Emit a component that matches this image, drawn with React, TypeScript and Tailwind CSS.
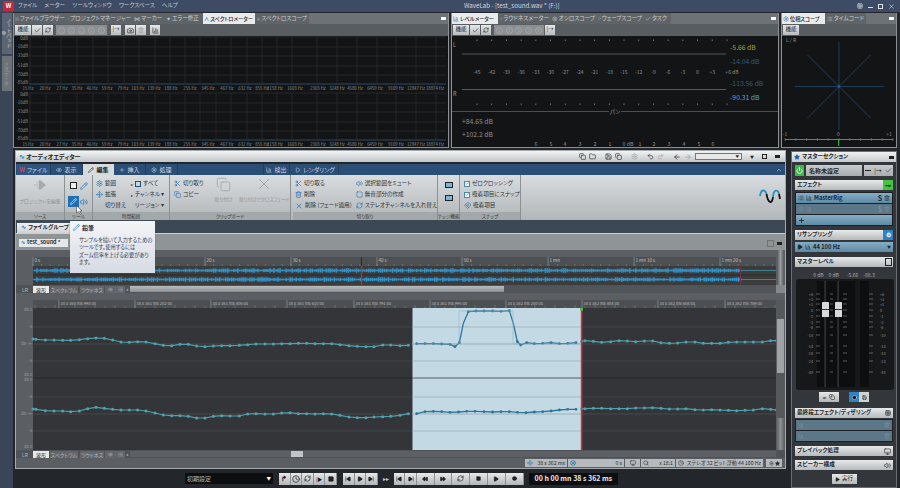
import React from "react";
import { Pencil, Scissors, Copy, X, Check, RefreshCw, Camera, Trash2, Star, Power, Plus, Undo2, Redo2, ArrowLeft, ArrowRight, Folder, Save, Settings, ChevronUp, Volume2, Search, Play, Square, Circle, SkipBack, SkipForward, Rewind, FastForward, Clock, Monitor, Magnet, Eye, BarChart3, Grid3x3, List, Move, LifeBuoy } from "lucide-react";

const Tab = ({ label, w, active, icon }: { label: string; w: string; active?: boolean; icon?: React.ReactNode }) => (
  <div className={`${w} h-[11px] flex items-center gap-[1px] px-[1px] whitespace-nowrap overflow-hidden leading-none ${active ? "bg-[#e9eaeb] text-[#1a1a1a] font-medium text-[5.2px]" : "bg-[#5f6468] text-[#c9cccd] text-[5.6px]"}`}>
    {icon}
    {label}
  </div>
);

const PanelHead = ({ children }: { children: React.ReactNode }) => (
  <div className="h-[11px] flex gap-[1px] bg-[#5f6468]">{children}</div>
);

const Btn = ({ children, w = "w-[10px]" }: { children?: React.ReactNode; w?: string }) => (
  <div className={`${w} h-[10px] flex items-center justify-center bg-gradient-to-b from-[#e6e7e8] to-[#b8bcbe] text-[#1c1c1c] text-[5.5px] leading-none`}>{children}</div>
);

const Kino = () => <Btn w="w-[16px]">機能</Btn>;

const Nums = ({ w }: { w: string }) => (
  <div className={`${w} h-[10px] bg-[#8b8f92] flex items-center justify-around px-[1px] text-[#a5a8aa]`}>
    {["1", "2", "3", "4", "5"].map((n) => (
      <span key={n} className="w-[7px] h-[7px] rounded-full border border-[#a5a8aa] text-[4px] leading-none flex items-center justify-center">{n}</span>
    ))}
  </div>
);

const hzLabels: [string, number][] = [["15 Hz",28],["20 Hz",45],["27 Hz",62],["35 Hz",77],["46 Hz",92],["59 Hz",107],["79 Hz",123],["103 Hz",138],["139 Hz",154],["188 Hz",171],["255 Hz",190],["345 Hz",208],["467 Hz",227],["632 Hz",245],["855 Hz",262],["1158 Hz",275],["1603 Hz",295],["2303 Hz",318],["3248 Hz",337],["4580 Hz",355],["6459 Hz",375],["9109 Hz",396],["12847 Hz",416],["18874 Hz",435]];
const gridX = [30,46,61,77,93,108,124,139,155,170,185,200,216,231,247,262,277,292,317,337,357,377,396,416,436];
const dbLabels = ["0dB","-16dB","-33dB","-51dB","-70dB","-85dB"];

const SpectrumChart = ({ top }: { top: number[] }) => (
  <g>
    {top.map((y, i) => (
      <g key={y}>
        <line x1={29} x2={446} y1={y} y2={y} stroke={i === 5 ? "#2d4a66" : "#2a2c2d"} strokeWidth={i === 5 ? 1 : 0.8} />
        <text x={28} y={i === 0 ? y + 3 : i === 5 ? y : y + 1} textAnchor="end" fontSize={4.3} fill="#8a8d8f">{dbLabels[i]}</text>
      </g>
    ))}
    {gridX.map((x) => (
      <line key={x} x1={x} x2={x} y1={top[0]} y2={top[5]} stroke="#2a2c2d" strokeWidth={0.8} />
    ))}
    {hzLabels.map(([t, x]) => (
      <text key={t} x={x} y={top[5] + 6} textAnchor="middle" fontSize={4.3} fill="#8a8d8f">{t}</text>
    ))}
  </g>
);

const lvl = ["-45","-42","-39","-36","-33","-30","-27","-24","-21","-18","-15","-12","-9","-6","-3","0","+3","+6 dB"];
const LevelChart = () => (
  <svg width={326} height={110} viewBox="452 37 326 110" className="block">
    <text x={453} y={48} fontSize={5.5} fill="#9a9da0">L</text>
    <text x={453} y={97} fontSize={5.5} fill="#9a9da0">R</text>
    <line x1={462} x2={726} y1={55} y2={55} stroke="#55585a" />
    <line x1={462} x2={726} y1={90.5} y2={90.5} stroke="#55585a" />
    {lvl.map((t, i) => {
      const x = 477 + i * 14.7;
      return (
        <g key={t}>
          <rect x={x - 0.4} y={40.5} width={0.9} height={1.4} fill="#8a8d8f" />
          <rect x={x - 0.4} y={104.5} width={0.9} height={1.4} fill="#8a8d8f" />
          <text x={x + (i === 17 ? 5 : 0)} y={75} textAnchor="middle" fontSize={5} fill="#8f9294">{t}</text>
        </g>
      );
    })}
    <line x1={452} x2={609} y1={112.5} y2={112.5} stroke="#4c4f51" />
    <line x1={621} x2={778} y1={112.5} y2={112.5} stroke="#4c4f51" />
    <text x={615} y={114.5} textAnchor="middle" fontSize={5.5} fill="#9a9da0">パン</text>
    <text x={462} y={124.5} fontSize={6.8} fill="#8f9294">+84.65 dB</text>
    <text x={462} y={138} fontSize={6.8} fill="#8f9294">+102.2 dB</text>
    <text x={730} y={51} fontSize={6.8} fill="#a8a238">-5.66 dB</text>
    <text x={730} y={65} fontSize={6.8} fill="#2f5b82">-14.04 dB</text>
    <text x={730} y={86.5} fontSize={6.8} fill="#2f5b82">-113.56 dB</text>
    <text x={730} y={100.5} fontSize={6.8} fill="#55a6d8">-90.31 dB</text>
    {[["6",536],["5",551],["4",565],["3",580],["2",595],["1",610],["0 dB",628],["1",640],["2",654],["3",669],["4",684],["5",699],["6",713]].map(([t, x], i) => (
      <text key={i} x={x as number} y={146.5} textAnchor="middle" fontSize={5.3} fill="#8f9294">{t}</text>
    ))}
  </svg>
);

const PhaseChart = () => (
  <svg width={113} height={110} viewBox="783 37 113 110" className="block">
    <text x={787} y={43} fontSize={5} fill="#8f9294">L / R</text>
    <g stroke="#24486e" strokeWidth={0.8}>
      <line x1={840} x2={840} y1={43} y2={131} />
      <line x1={796} x2={885} y1={87.5} y2={87.5} />
      <line x1={808.5} x2={871.5} y1={56} y2={119} />
      <line x1={808.5} x2={871.5} y1={119} y2={56} />
    </g>
    <circle cx={840} cy={87.5} r={1.2} fill="#2e5f90" />
    <text x={786} y={137} textAnchor="middle" fontSize={5} fill="#8f9294">-1</text>
    <text x={839.5} y={137} textAnchor="middle" fontSize={5} fill="#8f9294">0</text>
    <text x={890} y={137} textAnchor="middle" fontSize={5} fill="#8f9294">+1</text>
    <line x1={786} x2={894} y1={140.5} y2={140.5} stroke="#77797b" />
    {Array.from({ length: 11 }, (_, i) => (
      <line key={i} x1={786 + i * 10.8} x2={786 + i * 10.8} y1={139} y2={142} stroke="#77797b" strokeWidth={0.6} />
    ))}
    <rect x={839} y={141} width={1.2} height={6} fill="#22b33c" />
  </svg>
);

const RibbonRow = ({ icon, label, gray, cls = "" }: { icon?: React.ReactNode; label: string; gray?: boolean; cls?: string }) => (
  <div className={`h-[11px] flex items-center gap-[2px] whitespace-nowrap text-[5.6px] leading-none ${gray ? "text-[#8e9395]" : "text-[#2f3436]"} ${cls}`}>
    {icon}
    {label}
  </div>
);

const Group = ({ w, label, children }: { w: string; label: string; children: React.ReactNode }) => (
  <div className={`${w} h-full flex flex-col border-r border-[#8b9092] shrink-0`}>
    <div className="h-[37px] flex">{children}</div>
    <div className="h-[8px] bg-[#a3a8aa] flex items-center justify-center whitespace-nowrap text-[4.6px] text-[#33383a] leading-none">{label}</div>
  </div>
);

const BlueIc = ({ children }: { children: React.ReactNode }) => <span className="text-[#1f70b8] flex">{children}</span>;

function hash(n: number) {
  const s = Math.sin(n * 12.9898) * 43758.5453;
  return s - Math.floor(s);
}
const overview = Array.from({ length: 352 }, (_, i) => 0.35 + hash(i) * 0.65);

const Overview = () => (
  <svg width={758} height={28} viewBox="18 257 758 28" className="block">
    <rect x={33} y={257} width={743} height={9} fill="#4d5053" />
    <rect x={33} y={266} width={743} height={19} fill="#3c3c3d" />
    <line x1={33} x2={776} y1={275} y2={275} stroke="#2b2b2c" />
    {[["0 s",33],["10 s",119],["20 s",205],["30 s",291],["40 s",377],["50 s",462],["1 mn",548],["1 mn 10 s",634],["1 mn 20 s",720]].map(([t, x]) => (
      <g key={t as string}>
        <line x1={x as number} x2={x as number} y1={257} y2={266} stroke="#909497" strokeWidth={0.7} />
        <text x={(x as number) + 1.5} y={261.5} fontSize={4.5} fill="#c2c5c6">{t}</text>
      </g>
    ))}
    {Array.from({ length: 88 }, (_, i) => (
      <line key={i} x1={33 + i * 8.6} x2={33 + i * 8.6} y1={264} y2={266} stroke="#8a8d90" strokeWidth={0.5} />
    ))}
    <line x1={33} x2={776} y1={270.5} y2={270.5} stroke="#3f8291" />
    <line x1={33} x2={776} y1={279.5} y2={279.5} stroke="#3f8291" />
    {overview.map((a, i) => {
      const x = 34 + i * 2.01;
      const h1 = a * 4.6;
      const h2 = (0.35 + hash(i + 999) * 0.65) * 4.6;
      return (
        <g key={i} fill="#2f93cc">
          <rect x={x} y={270.5 - h1 / 2} width={1.7} height={h1} />
          <rect x={x} y={279.5 - h2 / 2} width={1.7} height={h2} />
        </g>
      );
    })}
    <rect x={361} y={257} width={0.8} height={9} fill="#222" />
    <rect x={361} y={266} width={1.2} height={19} fill="#c8283e" />
    <rect x={740} y={266} width={1} height={19} fill="#713045" />
  </svg>
);

type P = [number, number];
const z9 = (a: number[]): P[] => a.reduce<P[]>((r, v, i) => (i % 2 ? r : [...r, [a[i] / 3, 290 + a[i + 1] / 3]]), []);
const z10 = (a: number[]): P[] => a.reduce<P[]>((r, v, i) => (i % 2 ? r : [...r, [400 + a[i] / 3, 290 + a[i + 1] / 3]]), []);

const ch1: P[] = [[33, 339], ...z9([108,148,136,150,162,150,188,151,212,151,238,149,263,146,288,144,313,145,338,150,363,156,388,157,413,155,438,156,465,161,490,166,515,167,540,163,565,163,590,168,615,170,640,168,665,167,690,167,718,166,743,164,768,162,795,162,820,162,845,161,870,161,895,160,920,160,945,161,970,161,995,161,1020,164,1047,167,1072,169,1098,170,1122,170,1148,165,1172,165]),
  ...z10([0,167,25,166,50,161,75,161,100,161,125,162,150,163,165,170,178,158,190,100,205,65,228,63,252,63,278,63,303,64,328,62,340,100,352,155,362,165,380,158,403,161,428,160,453,158,478,161,503,160,528,158,545,154,555,152,580,154,605,157,632,155,657,152,682,153,707,155,733,153,758,153,783,158,808,160,833,159,858,156,885,156,910,160,935,160,960,160,985,157,1010,156,1035,156,1060,156,1087,156,1112,152,1130,152])];
const ch2: P[] = [[33, 409], ...z9([108,358,136,362,162,363,188,363,212,365,238,363,263,356,288,352,313,355,338,358,363,360,388,360,413,360,438,363,465,369,490,375,515,377,540,377,565,379,590,384,615,384,640,379,665,377,690,378,718,378,743,372,768,371,795,372,820,372,845,369,870,368,895,371,920,371,945,372,970,371,995,372,1020,376,1047,381,1072,383,1098,383,1122,381,1148,380,1172,379]),
  ...z10([0,376,25,371,50,371,75,365,100,364,125,365,150,367,175,366,200,364,225,364,252,365,278,366,303,365,328,365,353,367,378,368,403,366,428,365,453,363,478,360,503,358,528,358,545,356,555,356,580,355,605,355,632,356,657,356,682,356,707,354,733,354,758,353,783,355,808,357,833,357,858,356,885,359,910,360,935,359,960,360,985,361,1010,362,1035,361,1060,360,1087,356,1112,358,1130,360])];
const pts = (a: P[]) => a.map((p) => p.join(",")).join(" ");
const selIn = (p: P) => p[0] >= 412 && p[0] <= 581.5;

const rulerMain: [string, number][] = [["38 s 360 ms 998 us",59],["38 s 361 ms 202 us",135],["38 s 361 ms 406 us",211],["38 s 361 ms 610 us",287],["38 s 361 ms 791 us",354],["38 s 361 ms 995 us",430],["38 s 362 ms 200 us",506],["38 s 362 ms 404 us",582],["38 s 362 ms 608 us",658],["38 s 362 ms 789 us",725]];

const Channel = ({ data, base, top, bot }: { data: P[]; base: number; top: number; bot: number }) => {
  const inside = data.filter(selIn);
  const left = data.filter((p) => p[0] < 413);
  const right = data.filter((p) => p[0] >= 581);
  return (
    <g>
      <rect x={33} y={top} width={743} height={bot - top} fill="#343538" />
      {[top + 19, base, base + 17].map((y, i) => (
        <line key={i} x1={33} x2={776} y1={y} y2={y} stroke="#46484b" strokeWidth={i === 1 ? 1.2 : 0.8} />
      ))}
      <rect x={412.5} y={top} width={169} height={bot - top} fill="#c3dae5" />
      {[top + 19, base, base + 17].map((y, i) => (
        <line key={i} x1={412.5} x2={581} y1={y} y2={y} stroke="#9eb0b8" strokeWidth={i === 1 ? 1.2 : 0.8} />
      ))}
      <polyline points={pts(left)} fill="none" stroke="#4fa0ad" strokeWidth={1.2} />
      <polyline points={pts(right)} fill="none" stroke="#4fa0ad" strokeWidth={1.2} />
      <polyline points={pts(inside)} fill="none" stroke="#2d7599" strokeWidth={1.3} />
      {data.filter((p) => !selIn(p)).map((p, i) => (
        <circle key={i} cx={p[0]} cy={p[1]} r={1.5} fill="#4fa3b0" />
      ))}
      {inside.filter((p) => p[1] < 317 || p[1] > 335).map((p, i) => (
        <circle key={i} cx={p[0]} cy={p[1]} r={1.4} fill="#2d7599" />
      ))}
      {[["dB 0", top + 3], ["-6", top + 19.5], ["dB -∞", base + 1], ["-6", base + 17.5], ["dB 0", bot - 2]].map(([t, y], i) => (
        <text key={i} x={32} y={y as number} textAnchor="end" fontSize={3.8} fill="#9a9da0">{t}</text>
      ))}
    </g>
  );
};

const MainWave = () => (
  <svg width={758} height={150} viewBox="18 300 758 150" className="block">
    <rect x={33} y={300} width={743} height={8} fill="#4d5053" />
    {Array.from({ length: 75 }, (_, i) => (
      <line key={i} x1={35 + i * 10} x2={35 + i * 10} y1={i % 2 ? 306.5 : 305} y2={308} stroke="#8a8d90" strokeWidth={0.5} />
    ))}
    {rulerMain.map(([t, x]) => (
      <g key={t}>
        <line x1={x} x2={x} y1={300} y2={308} stroke="#909497" strokeWidth={0.7} />
        <text x={x + 1.5} y={305} fontSize={4.2} fill="#b9bcbe">{t}</text>
      </g>
    ))}
    <Channel data={ch1} base={344} top={308} bot={378} />
    <Channel data={ch2} base={414} top={378} bot={450} />
    <line x1={33} x2={776} y1={378} y2={378} stroke="#26272a" />
    <line x1={412.5} x2={581} y1={378} y2={378} stroke="#94a5ad" strokeWidth={1.4} />
    <polyline points="412,344 459,344 459,311 513,311 513,344 581,344" fill="none" stroke="#96b4c4" strokeWidth={0.6} />
    <rect x={580.8} y={308} width={1.6} height={142} fill="#d0303c" />
    <rect x={580} y={308} width={3} height={2.5} fill="#4cc13f" />
  </svg>
);

const Foot = ({ scroll }: { scroll: React.ReactNode }) => (
  <div className="h-[8px] flex items-center bg-[#4f5357] text-[5px] leading-none text-[#b6b9ba] pl-[6px] whitespace-nowrap">
    <span className="w-[11px]">LR</span>
    <span className="w-[16px] h-[7px] bg-[#e7e8e8] text-[#222] flex items-center justify-center">波形</span>
    <span className="w-[28px] h-[7px] ml-[1px] bg-[#62666a] flex items-center justify-center">スペクトラム</span>
    <span className="w-[24px] h-[7px] ml-[2px] bg-[#62666a] flex items-center justify-center">ラウドネス</span>
    <span className="w-[10px] h-[7px] ml-[1px] bg-[#62666a] flex items-center justify-center"><Eye size={5} /></span>
    <span className="w-[10px] h-[7px] bg-[#62666a] flex items-center justify-center"><List size={5} /></span>
    <span className="w-[4px] text-center text-[4px]">◂</span>
    {scroll}
  </div>
);

const Head = ({ label, right }: { label: string; right?: React.ReactNode }) => (
  <div className="h-[10px] mx-[3px] flex items-center justify-between bg-gradient-to-b from-[#e8e9ea] to-[#b6babc] text-[5.6px] font-semibold leading-none text-[#25282a] pl-[2px] whitespace-nowrap">
    {label}
    {right}
  </div>
);

const Slot = ({ dim, label, plus, small }: { dim?: boolean; label?: string; plus?: boolean; small?: boolean }) => (
  <div className={`h-[10px] flex items-center gap-[2px] px-[2px] text-[5.8px] font-semibold leading-none ${dim ? "bg-[#5c7788] text-[#7f919c]" : "bg-gradient-to-b from-[#86aec6] to-[#5f8aa4] text-[#1a2630]"}`}>
    {plus ? <Plus size={7} strokeWidth={3} className="text-[#1a2a33]" /> : (
      <>
        {!small && <List size={6} />}
        <BarChart3 size={6} />
        <span className="flex-1">{label}</span>
        {!small && <span className="text-[7px] leading-none">S</span>}
        <Trash2 size={6} />
      </>
    )}
  </div>
);

const scaleRows: [string, number][] = [["+6",292],["+3",297],["+1",302],["0",308],["-1",314],["-3",320],["-6",325],["-10",333],["-14",344],["-18",351],["-24",359],["-48",370]];

const MasterMeter = () => (
  <svg width={98} height={111} viewBox="796 277 98 111" className="block">
    <rect x={796} y={277} width={98} height={111} rx={3} fill="#17181a" />
    <rect x={817} y={279} width={38} height={106} fill="#0d0e0f" />
    <rect x={860} y={279} width={9} height={106} fill="#0d0e0f" />
    {scaleRows.map(([t, y]) => (
      <g key={t}>
        <text x={813} y={y + 1.5} textAnchor="end" fontSize={3.8} fill="#8d9092">{t}</text>
        <text x={880} y={y + 1.5} fontSize={3.8} fill="#8d9092">{t}</text>
        <g stroke="#8d9092" strokeWidth={0.6}>
          <line x1={816} x2={820} y1={y} y2={y} />
          <line x1={830} x2={833} y1={y} y2={y} />
          <line x1={843} x2={847} y1={y} y2={y} />
          <line x1={869} x2={873} y1={y} y2={y} />
        </g>
      </g>
    ))}
    <rect x={824.5} y={279} width={1.2} height={106} fill="#3d3f41" />
    <rect x={837.5} y={279} width={1.2} height={106} fill="#3d3f41" />
    {[822, 835].map((x) => (
      <g key={x}>
        <rect x={x} y={300} width={7} height={15} rx={0.5} fill="#d8d9da" />
        <rect x={x} y={307} width={7} height={1} fill="#333" />
      </g>
    ))}
  </svg>
);

const TB = ({ children, w = "w-[11.6px]" }: { children?: React.ReactNode; w?: string }) => (
  <div className={`${w} h-[12px] flex items-center justify-center bg-gradient-to-b from-[#e7e8e8] to-[#b4b7b9] border-r border-[#8d9193] text-[#17191a]`}>{children}</div>
);

const Sp = ({ className }: { className: string }) => <span className={className} />;

export default function App() {
  return (
    <div className="w-[900px] h-[488px] bg-[#23262b] flex flex-col overflow-hidden font-['Noto_Sans_CJK_JP','Noto_Sans',sans-serif] [font-feature-settings:'palt'] relative">
      {/* title bar */}
      <div className="h-[12px] bg-[#3d4b64] flex items-center text-[#c5cbd5] text-[5.6px] leading-none">
        <div className="w-[11px] h-[10px] ml-[3px] bg-[#c2293f] rounded-[1px] text-white text-[6px] font-bold flex items-center justify-center">W</div>
        <div className="flex gap-[7px] ml-[4px] whitespace-nowrap">
          <span>ファイル</span><span>メーター</span><span>ツールウィンドウ</span><span>ワークスペース</span><span>ヘルプ</span>
        </div>
        <span className="absolute left-[464px] top-[3px] text-[6.2px] text-[#d3d8df]">WaveLab - [test_sound.wav * (F:)]</span>
        <div className="ml-auto mr-[5px] flex gap-[5px] items-center text-[#dfe3e9]">
          <Grid3x3 size={6} /><span className="w-[5px] h-[1px] bg-[#dfe3e9] mt-[2px]" /><Sp className="w-[5px] h-[5px] border border-[#dfe3e9]" /><X size={7} />
        </div>
      </div>

      <div className="flex-1 flex min-h-0">
        {/* left vertical tabs */}
        <div className="w-[13px] bg-[#3a4656] flex flex-col items-center pt-[1px] gap-[2px] shrink-0">
          <div className="w-[10px] h-[41px] bg-[#5a6473] text-[#c8ccd1] text-[5px] leading-none flex flex-col items-center justify-end pb-[1px] gap-[1px] [writing-mode:vertical-rl]">
            ノートパッド<Grid3x3 size={6} />
          </div>
          <div className="w-[10px] h-[35px] bg-[#6c7278] text-[#9a9ea2] text-[5px] leading-none flex items-center justify-center [writing-mode:vertical-rl]">メタデータ</div>
        </div>

        <div className="flex-1 flex flex-col min-w-0">
          {/* top panels */}
          <div className="h-[137px] flex gap-[2px] pt-[1px] shrink-0">
            <div className="w-[436px] h-[135px] bg-[#5f6468] border-x border-b border-[#8d9194] flex flex-col">
              <PanelHead>
                <Tab label="ファイルブラウザー" w="w-[52px]" icon={<List size={6} />} />
                <Tab label="プロジェクトマネージャー" w="w-[65px]" icon={<Grid3x3 size={6} />} />
                <Tab label="マーカー" w="w-[31px]" icon={<span className="text-[6px]">⋈</span>} />
                <Tab label="エラー修正" w="w-[37px]" icon={<span className="text-[6px]">✦</span>} />
                <Tab label="スペクトロメーター" w="w-[52px]" active icon={<span className="text-[#1c6fb5] font-bold">∧</span>} />
                <Tab label="スペクトロスコープ" w="w-[52px]" icon={<BarChart3 size={6} />} />
                <div className="flex-1 bg-[#6d7276] flex items-center justify-end pr-[2px] text-white"><Sp className="w-[5px] h-[3px] bg-white" /></div>
              </PanelHead>
              <div className="h-[12px] flex items-center gap-[1px] pl-[1px] bg-[#585d61]">
                <Kino /><Btn><Check size={7} /></Btn><Btn><RefreshCw size={6} /></Btn>
                <div className="ml-[2px]"><Nums w="w-[51px]" /></div>
                <div className="ml-[3px]"><Btn>|→</Btn></div>
                <div className="ml-[3px] flex gap-[1px]"><Btn><Camera size={7} /></Btn><Btn><Trash2 size={6} className="text-[#999]" /></Btn></div>
                <div className="ml-[3px]"><Btn><BarChart3 size={7} /></Btn></div>
              </div>
              <div className="flex-1 bg-[#131415] overflow-hidden">
                <svg width={434} height={110} viewBox="14 37 434 110" className="block">
                  <SpectrumChart top={[38, 48, 57, 67, 76, 85]} />
                  <SpectrumChart top={[94, 104, 113, 123, 132, 141]} />
                </svg>
              </div>
            </div>

            <div className="w-[328px] h-[135px] bg-[#5f6468] border-x border-b border-[#8d9194] flex flex-col">
              <PanelHead>
                <Tab label="レベルメーター" w="w-[46px]" active icon={<BarChart3 size={6} className="text-[#1c6fb5]" />} />
                <Tab label="ラウドネスメーター" w="w-[51px]" icon={<Pencil size={6} />} />
                <Tab label="オシロスコープ" w="w-[45px]" icon={<Settings size={6} />} />
                <Tab label="ウェーブスコープ" w="w-[46px]" icon={<Circle size={5} />} />
                <Tab label="タスク" w="w-[26px]" icon={<Check size={6} />} />
                <div className="flex-1 bg-[#6d7276] flex items-center justify-end pr-[2px]"><Sp className="w-[5px] h-[3px] bg-white" /></div>
              </PanelHead>
              <div className="h-[12px] flex items-center gap-[1px] pl-[1px] bg-[#585d61]">
                <Kino /><Btn><Check size={7} /></Btn><Btn><RefreshCw size={6} /></Btn>
                <div className="ml-[2px]"><Nums w="w-[50px]" /></div>
                <Btn>|→</Btn>
              </div>
              <div className="flex-1 bg-[#131415] overflow-hidden"><LevelChart /></div>
            </div>

            <div className="w-[116px] h-[135px] bg-[#5f6468] border-x border-b border-[#8d9194] flex flex-col">
              <PanelHead>
                <Tab label="位相スコープ" w="w-[43px]" active icon={<Settings size={6} className="text-[#1c6fb5]" />} />
                <Tab label="タイムコード" w="w-[39px]" icon={<List size={6} />} />
                <div className="flex-1 bg-[#6d7276] flex items-center justify-end pr-[2px]"><Sp className="w-[5px] h-[3px] bg-white" /></div>
              </PanelHead>
              <div className="h-[12px] flex items-center pl-[1px] bg-[#585d61]"><Kino /></div>
              <div className="flex-1 bg-[#131415] overflow-hidden"><PhaseChart /></div>
            </div>
          </div>

          {/* lower */}
          <div className="flex-1 flex gap-[3px] min-h-0">
            <div className="w-[775px] flex flex-col shrink-0">
              <div className="h-[319px] mt-[1px] ml-[2px] w-[771px] border border-[#a5aaad] bg-[#3c4853] flex flex-col shrink-0 relative">
                {/* editor title */}
                <div className="h-[11px] bg-gradient-to-b from-[#f2f3f3] to-[#c3c7c9] flex items-center pl-[3px] text-[6px] leading-none text-[#222] font-semibold shrink-0">
                  <span className="text-[#1a73b8] text-[7px] mr-[1px]">∿</span>オーディオエディター
                  <div className="ml-auto flex items-center gap-[3px] pr-[5px] text-[#222]">
                    <Copy size={7} /><Folder size={7} /><Sp className="w-[3px]" /><Save size={7} /><Copy size={7} /><Sp className="w-[3px]" /><Settings size={7} className="text-[#999]" /><Sp className="w-[3px]" /><Undo2 size={7} /><Redo2 size={7} className="text-[#999]" /><Sp className="w-[3px]" /><ArrowLeft size={8} /><ArrowRight size={8} className="text-[#999]" />
                    <div className="w-[47px] h-[7px] bg-[#e8e8e8] border border-[#777] flex justify-end items-center pr-[2px] text-[3.5px]">▼</div>
                    <Sp className="w-[2px]" /><span className="text-[4px]">▼</span><Sp className="w-[2px]" /><Sp className="w-[5px] h-[5px] border border-[#222]" /><Sp className="w-[2px]" /><Sp className="w-[5px] h-[3px] bg-[#222]" />
                  </div>
                </div>
                <div className="h-[2px] bg-[#23262a] shrink-0" />
                {/* tabs */}
                <div className="h-[11px] bg-[#2a4e76] flex items-center text-[6px] leading-none text-[#cdd6e0] pl-[1px] shrink-0">
                  <div className="w-[34px] h-full flex items-center justify-center gap-[2px] bg-[#305680] border-r border-[#223f60]"><span className="text-[#d8405a] font-bold">W</span>ファイル</div>
                  <div className="w-[32px] h-full flex items-center justify-center gap-[2px] border-r border-[#223f60]"><Eye size={6} />表示</div>
                  <div className="w-[31px] h-full flex items-center justify-center gap-[2px] bg-[#d8dbdd] text-[#222] font-semibold"><Pencil size={6} />編集</div>
                  <div className="w-[32px] h-full flex items-center justify-center gap-[2px] border-r border-[#223f60]"><Plus size={6} />挿入</div>
                  <div className="w-[32px] h-full flex items-center justify-center gap-[2px] border-r border-[#223f60]"><Settings size={6} />処理</div>
                  <div className="ml-[85px] w-[27px] h-full flex items-center justify-center gap-[2px] border-x border-[#223f60]"><BarChart3 size={6} />検出</div>
                  <div className="w-[47px] ml-[2px] h-full flex items-center justify-center gap-[2px] border-r border-[#223f60]"><Play size={6} />レンダリング</div>
                  <ChevronUp size={6} className="ml-auto mr-[3px] text-white" />
                </div>
                {/* ribbon */}
                <div className="h-[45px] bg-gradient-to-b from-[#dadde0] to-[#b1b6b8] flex shrink-0">
                  <Group w="w-[49px]" label="ソース">
                    <div className="w-full flex flex-col items-center pt-[3px] text-[#8e9395] text-[5px] leading-none">
                      <svg width={14} height={14} viewBox="0 0 14 14"><path d="M1 7 7 2 13 7 7 12Z" fill="#a6abad" /><path d="M3 5v4M5 3.500v7" stroke="#e3e5e6" /></svg>
                      <span className="mt-[6px] whitespace-nowrap">プロジェクトを編集</span>
                    </div>
                  </Group>
                  <Group w="w-[28px]" label="ツール">
                    <div className="grid grid-cols-2 grid-rows-2 gap-y-[3px] pl-[3px] pt-[5px] h-[33px] w-full">
                      <span className="w-[10px] h-[10px] flex items-center justify-center"><Sp className="w-[7px] h-[7px] border border-[#222] bg-[#eee]" /></span>
                      <span className="flex items-center text-[#1f70b8]"><Pencil size={8} /></span>
                      <span className="w-[11px] h-[11px] bg-[#1f6fb5] text-white flex items-center justify-center"><Pencil size={7} /></span>
                      <span className="flex items-center text-[#1f70b8]"><Volume2 size={8} /></span>
                    </div>
                  </Group>
                  <Group w="w-[77px]" label="時間範囲">
                    <div className="flex flex-col w-[37px] pl-[3px] pt-[3px]">
                      <RibbonRow label="範囲" icon={<BlueIc><Settings size={7} /></BlueIc>} />
                      <RibbonRow label="拡張" icon={<BlueIc><Move size={7} /></BlueIc>} />
                      <RibbonRow label="切り替え" cls="pl-[9px]" />
                    </div>
                    <div className="flex flex-col pl-[1px] pt-[3px] w-[38px]">
                      <RibbonRow label="すべて" icon={<><span className="text-[4px]">▸</span><Sp className="w-[6px] h-[6px] border border-[#1b4f80]" /></>} />
                      <RibbonRow label="チャンネル ▾" icon={<span className="text-[4px]">▸</span>} />
                      <RibbonRow label="リージョン ▾" cls="pl-[4px]" />
                    </div>
                  </Group>
                  <Group w="w-[121px]" label="クリップボード">
                    <div className="flex flex-col w-[39px] pl-[4px] pt-[3px]">
                      <RibbonRow label="切り取り" icon={<BlueIc><Scissors size={7} /></BlueIc>} />
                      <RibbonRow label="コピー" icon={<BlueIc><Copy size={7} /></BlueIc>} />
                    </div>
                    <div className="w-[30px] flex flex-col items-center pt-[2px] text-[#8e9395]">
                      <Copy size={15} strokeWidth={1} />
                      <span className="text-[4.8px] leading-none whitespace-nowrap mt-[5px]">貼り付け</span>
                    </div>
                    <div className="w-[52px] flex flex-col items-center text-[#8e9395]">
                      <X size={18} strokeWidth={1} />
                      <span className="text-[4.6px] leading-none whitespace-nowrap mt-[4px]">貼り付けとクロスフェード</span>
                    </div>
                  </Group>
                  <div className="w-[2px] shrink-0" />
                  <Group w="w-[145px]" label="切り取り">
                    <div className="flex flex-col w-[64px] pl-[2px] pt-[3px]">
                      <RibbonRow label="切り取る" icon={<BlueIc><Scissors size={7} /></BlueIc>} />
                      <RibbonRow label="削除" icon={<BlueIc><Trash2 size={7} /></BlueIc>} />
                      <RibbonRow label="削除 (フェード適用)" icon={<BlueIc><X size={8} /></BlueIc>} />
                    </div>
                    <div className="flex flex-col pt-[3px]">
                      <RibbonRow label="選択範囲をミュート" icon={<BlueIc><Volume2 size={7} /></BlueIc>} />
                      <RibbonRow label="無音部分の作成" icon={<BlueIc><Square size={7} /></BlueIc>} />
                      <RibbonRow label="ステレオチャンネルを入れ替え" icon={<BlueIc><RefreshCw size={7} /></BlueIc>} />
                    </div>
                  </Group>
                  <Group w="w-[22px]" label="ナッジ機能">
                    <div className="w-full flex flex-col items-center gap-[7px] pt-[7px]">
                      <Sp className="w-[8px] h-[6px] border border-[#222] bg-[#7fb4d8]" />
                      <Sp className="w-[8px] h-[6px] border border-[#222] bg-[#7fb4d8]" />
                    </div>
                  </Group>
                  <Group w="w-[61px]" label="スナップ">
                    <div className="flex flex-col pl-[4px] pt-[3px]">
                      <RibbonRow label="ゼロクロッシング" icon={<span className="w-[6px] h-[6px] bg-white border border-[#4b86b0] text-[#1b5a90] flex items-center justify-center"><Check size={5} strokeWidth={3} /></span>} />
                      <RibbonRow label="吸着項目にスナップ" icon={<span className="w-[6px] h-[6px] bg-white border border-[#4b86b0] text-[#1b5a90] flex items-center justify-center"><Check size={5} strokeWidth={3} /></span>} />
                      <RibbonRow label="吸着項目" icon={<BlueIc><Magnet size={7} /></BlueIc>} />
                    </div>
                  </Group>
                  <div className="flex-1 flex items-center justify-end pr-[4px] pb-[2px]">
                    <svg width={22} height={18} viewBox="0 0 22 18"><path d="M1 8C2 1 6 1 7.500 6" fill="none" stroke="#2393cc" strokeWidth={1.8} /><path d="M7.500 6C9 15 13 17 14 9" fill="none" stroke="#111" strokeWidth={1.8} /><path d="M14 9C14.500 1 19 1 20 6" fill="none" stroke="#2393cc" strokeWidth={1.8} /><path d="M20 6L21 11" stroke="#111" strokeWidth={1.8} /></svg>
                  </div>
                </div>
                {/* file group strip */}
                <div className="h-[13px] flex items-end pl-[1px] shrink-0">
                  <div className="w-[60px] h-[10px] bg-gradient-to-b from-[#f1f2f2] to-[#cfd2d3] flex items-center gap-[2px] pl-[4px] text-[5.6px] leading-none font-semibold text-[#222] whitespace-nowrap"><span className="text-[#1a73b8]">∿</span>ファイルグループ</div>
                </div>
                <div className="h-[17px] bg-[#8f9597] border-t border-[#ccd0d2] flex items-end pl-[3px] pb-[3px] shrink-0">
                  <div className="w-[49px] h-[8px] bg-[#e6e7e8] flex items-center gap-[2px] pl-[2px] text-[5.4px] leading-none font-semibold text-[#333]"><span className="text-[#1a73b8]">∿</span>test_sound *</div>
                  <div className="ml-auto flex items-center gap-[3px] pr-[3px]">
                    <Sp className="w-[7px] h-[7px] border border-[#6d7275]" /><Sp className="w-[5px] h-[3px] bg-[#222]" />
                  </div>
                </div>
                {/* overview */}
                <div className="h-[43px] flex bg-[#5b5f63] shrink-0">
                  <div className="w-[760px] flex flex-col">
                    <div className="h-[7px]" />
                    <div className="pl-[2px]"><Overview /></div>
                    <Foot scroll={<>
                      <div className="w-[374px] h-[6px] ml-[1px] bg-gradient-to-b from-[#b7bbbd] to-[#8b9092]" />
                      <div className="flex-1 h-[6px] bg-[#50555a]" />
                    </>} />
                  </div>
                  <div className="flex-1 flex flex-col">
                    <div className="h-[35px] bg-gradient-to-r from-[#55595c] via-[#9a9ea0] to-[#55595c] mx-[1px]" />
                    <div className="h-[8px] bg-[#84888b]" />
                  </div>
                </div>
                {/* main wave */}
                <div className="h-[157px] flex bg-[#5b5f63] shrink-0">
                  <div className="w-[760px] flex flex-col">
                    <div className="h-[7px]" />
                    <div className="pl-[2px]"><MainWave /></div>
                  </div>
                  <div className="flex-1 flex flex-col pt-[7px]">
                    <div className="h-[19px] bg-[#55595c]" />
                    <div className="h-[54px] bg-[#9fa3a5] mx-[1px]" />
                    <div className="flex-1 bg-[#55595c] flex items-end">
                      <div className="w-full h-[32px] bg-gradient-to-r from-[#55595c] via-[#8d9193] to-[#55595c]" />
                    </div>
                  </div>
                </div>
                <div className="h-[8px] flex shrink-0">
                  <div className="flex-1">
                    <Foot scroll={<>
                      <div className="w-[161px] h-[6px] ml-[1px] bg-[#5c6064]" />
                      <div className="w-[12px] h-[6px] bg-[#c2c5c7]" />
                      <div className="flex-1 h-[6px] bg-[#5c6064]" />
                    </>} />
                  </div>
                  <div className="w-[9px] bg-[#4f5357]" />
                </div>
                {/* status */}
                <div className="h-[10px] bg-[#5b5f63] flex items-center pl-[509px] gap-[1px] text-[5.2px] leading-none text-[#2b2e30] shrink-0 whitespace-nowrap">
                  <div className="w-[42px] h-[8px] bg-[#b6babc] flex items-center justify-between px-[2px]"><Move size={6} className="text-[#1c6fb5]" />38 s 362 ms</div>
                  <div className="w-[56px] h-[8px] bg-[#b6babc] flex items-center justify-between px-[2px]"><LifeBuoy size={6} className="text-[#1c6fb5]" />0 s</div>
                  <div className="w-[15px] h-[8px] bg-[#b6babc] flex items-center justify-center"><Monitor size={6} /></div>
                  <div className="w-[34px] h-[8px] bg-[#b6babc] flex items-center justify-between px-[2px]"><Search size={6} />x 18:1</div>
                  <div className="w-[87px] h-[8px] bg-[#b6babc] flex items-center gap-[3px] px-[2px]"><Clock size={6} />ステレオ 32 ビット浮動 44 100 Hz</div>
                  <div className="w-[16px] h-[8px] ml-[2px] bg-[#b6babc] flex items-center justify-center gap-[1px]"><Settings size={5} /><Star size={5} fill="#222" /></div>
                </div>

                {/* tooltip */}
                <div className="absolute left-[54px] top-[70px] w-[85px] h-[52px] bg-gradient-to-b from-[#f4f5f7] to-[#d6dae3] shadow-[0_0_1px_#555] z-10 px-[3px] pt-[3px] text-[#28304a] leading-none">
                  <div className="flex items-center gap-[2px] text-[6px] font-semibold"><Pencil size={7} className="text-[#1a73b8]" />鉛筆</div>
                  <p className="mt-[5px] ml-[6px] text-[5.2px] leading-[7.3px] whitespace-nowrap text-[#343b50]">サンプルを描いて入力するための<br />ツールです。使用するには<br />ズーム倍率を上げる必要があり<br />ます。</p>
                </div>
                {/* mouse cursor */}
                <svg width={7} height={10} viewBox="0 0 7 10" className="absolute left-[60px] top-[54px] z-20"><path d="M.5.5v7.500l2-1.500 1.500 3 1.200-.6-1.500-3H6Z" fill="#fff" stroke="#222" strokeWidth={0.5} /></svg>
              </div>

              {/* transport */}
              <div className="h-[19px] flex items-center text-[#222] pl-[172px]">
                <div className="w-[88px] h-[11px] bg-[#0d0e10] rounded-[1px] flex items-center justify-between px-[2px] text-[6px] leading-none text-[#b9bcbe]">初期設定<span className="text-[4.5px] text-white">▼</span></div>
                <div className="flex ml-[6px]">
                  <TB><span className="text-[7px] font-bold">↱</span></TB>
                  <TB><Clock size={8} /></TB>
                  <TB><RefreshCw size={7} /></TB>
                  <TB><span className="text-[5px]">|▶</span></TB>
                  <TB><Square size={6} fill="#222" /></TB>
                </div>
                <div className="flex ml-[6px]">
                  <TB><SkipBack size={6} fill="#222" /></TB>
                  <TB><Play size={6} fill="#222" /></TB>
                  <TB><SkipForward size={6} fill="#222" /></TB>
                </div>
                <div className="w-[16px] flex justify-center text-[#c8cbcc] text-[6px]">▸▸</div>
                <div className="flex">
                  <TB><SkipBack size={6} fill="#222" /></TB>
                  <TB><SkipForward size={6} fill="#222" /></TB>
                  <TB w="w-[18px]"><Rewind size={6} fill="#222" /></TB>
                  <TB w="w-[17.5px]"><FastForward size={6} fill="#222" /></TB>
                  <TB w="w-[18px]"><RefreshCw size={7} /></TB>
                  <TB w="w-[17.5px]"><Square size={5} fill="#222" /></TB>
                  <TB w="w-[18px]"><Play size={6} fill="#222" /></TB>
                  <TB w="w-[18px]"><Circle size={5} fill="#222" /></TB>
                </div>
                <div className="w-[89px] h-[12px] ml-[5px] bg-[#0c0d10] rounded-[1px] flex items-center justify-center text-[7px] font-semibold text-[#e6e8ea] whitespace-nowrap">00 h 00 mn 38 s 362 ms</div>
              </div>
            </div>

            {/* master section */}
            <div className="w-[106px] h-[337px] mt-[2px] bg-[#33373b] border border-[#6a6f72] flex flex-col shrink-0">
              <div className="h-[10px] bg-gradient-to-b from-[#f0f1f1] to-[#c6cacc] flex items-center gap-[2px] pl-[2px] text-[5.6px] leading-none font-semibold text-[#222] shrink-0">
                <Star size={6} fill="#1a5f9e" className="text-[#1a5f9e]" />マスターセクション
                <Sp className="ml-auto mr-[2px] w-[5px] h-[3px] bg-[#222]" />
              </div>
              <div className="flex h-[11px] mt-[3px] mx-[3px] gap-[2px] shrink-0">
                <div className="w-[9px] bg-[#3fb84a] flex items-center justify-center text-white"><Power size={7} strokeWidth={3} /></div>
                <div className="w-[56px] bg-gradient-to-b from-[#c9cccd] to-[#a9adaf] flex items-center pl-[3px] text-[6px] leading-none font-semibold text-[#2a2d2f]">名称未設定</div>
                <div className="flex-1 bg-gradient-to-b from-[#c9cccd] to-[#a9adaf] flex items-center justify-around text-[#222]"><Sp className="w-[6px] h-[1px] bg-[#222]" /><span className="text-[6px]">|→</span><Check size={7} /></div>
              </div>
              <div className="mt-[4px] shrink-0"><Head label="エフェクト" right={<span className="w-[10px] h-full bg-[#46c341] flex items-center justify-center text-[#14350f] text-[7px]">⊸</span>} /></div>
              <div className="mx-[3px] mt-[2px] bg-[#1d1f22] p-[1px] flex flex-col gap-[1px] shrink-0">
                <Slot label="MasterRig" />
                <Slot dim />
                <Slot plus />
              </div>
              <div className="mt-[4px] shrink-0"><Head label="リサンプリング" right={<span className="w-[10px] h-full bg-[#2f82c6] flex items-center justify-center text-white text-[6px]">⚙</span>} /></div>
              <div className="mx-[3px] mt-[2px] h-[10px] bg-gradient-to-b from-[#86aec6] to-[#5f8aa4] flex items-center gap-[2px] px-[2px] text-[5.8px] font-semibold leading-none text-[#1a2630] shrink-0">
                <Play size={6} fill="#1a2630" /><BarChart3 size={6} /><span className="flex-1">44 100 Hz</span><span className="text-[4px]">▼</span>
              </div>
              <div className="mt-[5px] shrink-0"><Head label="マスターレベル" right={<span className="w-[7px] h-[8px] mr-[1px] border border-[#222]" />} /></div>
              <div className="flex justify-center gap-[5px] mt-[3px] h-[9px] items-center text-[5px] leading-none text-[#a9acae] shrink-0"><span>0 dB</span><span>0 dB</span><span className="ml-[3px]">-5.66</span><span>-88.3</span></div>
              <div className="ml-[4px] shrink-0"><MasterMeter /></div>
              <div className="flex justify-center gap-[10px] h-[10px] mt-[2px] shrink-0">
                <div className="w-[20px] h-[10px] bg-gradient-to-b from-[#e7e8e8] to-[#b4b7b9] flex items-center justify-center gap-[3px] text-[#222] text-[6px]">=<Copy size={6} /></div>
                <div className="w-[20px] h-[10px] flex"><span className="w-[10px] bg-[#2f82c6] flex items-center justify-center text-white"><Circle size={5} fill="#111" /></span><span className="flex-1 bg-[#d0d3d4] flex items-center justify-center"><Save size={5} /></span></div>
              </div>
              <div className="mt-[6px] shrink-0"><Head label="最終段エフェクト/ディザリング" right={<Grid3x3 size={6} className="mr-[2px]" />} /></div>
              <div className="mx-[3px] mt-[1px] flex flex-col gap-[1px] bg-[#1d1f22] p-[1px] shrink-0">
                <Slot dim small />
                <Slot dim small />
              </div>
              <div className="mt-[4px] shrink-0"><Head label="プレイバック処理" right={<Monitor size={7} className="mr-[2px]" />} /></div>
              <div className="mt-[4px] shrink-0"><Head label="スピーカー構成" right={<Volume2 size={7} className="mr-[2px]" />} /></div>
              <div className="mt-[4px] mx-auto w-[25px] h-[10px] bg-gradient-to-b from-[#e7e8e8] to-[#b4b7b9] flex items-center justify-center gap-[2px] text-[5.5px] leading-none text-[#222] shrink-0"><Play size={5} fill="#222" />実行</div>
            </div>
          </div>
        </div>
      </div>
    </div>
  );
}
